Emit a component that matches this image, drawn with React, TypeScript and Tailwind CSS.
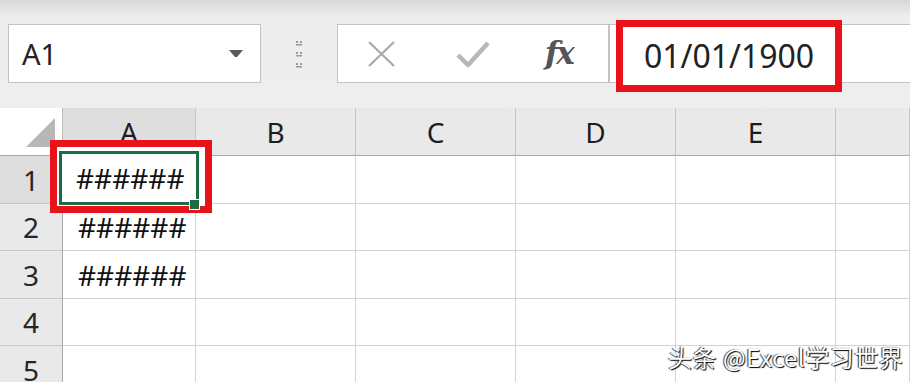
import React from "react";

const COLS = ["A", "B", "C", "D", "E", ""];
const ROWS = [
  { n: 1, h: "h-[48px]", v: "" },
  { n: 2, h: "h-[47px]", v: "######" },
  { n: 3, h: "h-[48px]", v: "######" },
  { n: 4, h: "h-[47px]", v: "" },
  { n: 5, h: "h-[48px]", v: "" },
];

function Grip() {
  return (
    <svg width="8" height="30" viewBox="0 0 8 30" className="text-[#9a9a9a]">
      {[2, 13, 24].map((y) => (
        <g key={y} fill="currentColor">
          <rect x="1" y={y} width="2" height="2" />
          <rect x="5" y={y} width="2" height="2" />
          <rect x="1" y={y + 3} width="6" height="1.5" />
        </g>
      ))}
    </svg>
  );
}

function FormulaBar() {
  return (
    <div className="h-[108px] bg-[linear-gradient(#d8d8d8,#ededed_16px,#eeeeee)] flex items-start pt-6">
      <div className="ml-2 w-[253px] h-[59px] bg-white border border-[#c3c3c3] flex items-center justify-between pl-[13px] pr-[17px]">
        <span className="text-[29px] text-[#222] leading-none">A1</span>
        <svg width="14" height="8" viewBox="0 0 14 8">
          <path d="M0 0 H14 L8 7 H6 Z" fill="#5a5a5a" />
        </svg>
      </div>
      <div className="w-[76px] h-[59px] flex items-center justify-center">
        <Grip />
      </div>
      <div className="w-[272px] h-[59px] bg-white border border-[#c3c3c3] flex items-center">
        <svg width="30" height="28" viewBox="0 0 30 28" className="ml-[29px]">
          <path d="M2 2 L27 26 M27 2 L2 26" stroke="#a9a9a9" strokeWidth="2.2" fill="none" />
        </svg>
        <svg width="34" height="28" viewBox="0 0 34 28" className="ml-[59px]">
          <path d="M2 15 L12 25 L32 3" stroke="#b8b8b8" strokeWidth="4.5" fill="none" strokeLinejoin="round" />
        </svg>
        <span className="ml-[55px] text-[31px] italic text-[#555] leading-none [font-family:'DejaVu_Serif','Liberation_Serif',serif] font-bold tracking-[-2px]">
          fx
        </span>
      </div>
      <div className="relative flex-1 h-[59px] bg-white border border-[#c3c3c3] border-r-0">
        <div className="absolute left-[6px] -top-[5px] w-[226px] h-[72px] border-[7px] border-[#e8121a] bg-white flex items-center justify-center">
          <span className="text-[32px] text-[#222] leading-none">01/01/1900</span>
        </div>
      </div>
    </div>
  );
}

function Sheet() {
  return (
    <div className="relative grid grid-cols-[63px_133px_160px_160px_160px_160px_1fr]">
      <div className="h-[48px] border-r border-b border-[#a9a9a9] border-r-[#bdbdbd] relative">
        <svg width="30" height="30" viewBox="0 0 30 30" className="absolute left-[26px] top-[10px]">
          <path d="M29 0 V29 H0 Z" fill="#b7b7b7" />
        </svg>
      </div>
      {COLS.map((c, i) => (
        <div
          key={i}
          className={`h-[48px] flex items-center justify-center border-b border-b-[#a9a9a9] border-r border-r-[#c6c6c6] text-[28px] text-[#1e1e1e] ${
            i === 0 ? "bg-[#dedede]" : "bg-[#e9e9e9]"
          }`}
        >
          {c}
        </div>
      ))}
      {ROWS.map((r) => (
        <React.Fragment key={r.n}>
          <div
            className={`${r.h} flex items-center justify-center border-r border-r-[#a9a9a9] border-b border-b-[#c6c6c6] text-[28px] text-[#262626] ${
              r.n === 1 ? "bg-[#dedede]" : "bg-[#e9e9e9]"
            }`}
          >
            {r.n}
          </div>
          {COLS.map((c, i) => (
            <div
              key={c + i}
              className={`${r.h} flex items-center pl-[15px] border-r border-b border-[#d2d2d2] bg-white text-[28px] text-[#111]`}
            >
              {i === 0 ? r.v : ""}
            </div>
          ))}
        </React.Fragment>
      ))}
      <div className="absolute left-[50px] top-[32px] w-[162px] h-[73px] border-[7px] border-[#e8121a] bg-white">
        <div className="absolute left-[2px] top-[4px] w-[140px] h-[54px] border-[3px] border-[#1e6b48] flex items-center pl-[14px] text-[28px] text-[#111]">
          ######
        </div>
        <div className="absolute left-[132px] top-[52px] w-[9px] h-[9px] bg-[#1e6b48] border border-white box-content" />
      </div>
    </div>
  );
}

export default function App() {
  return (
    <div className="relative w-[910px] h-[382px] overflow-hidden bg-white [font-family:'Noto_Sans','Liberation_Sans',sans-serif]">
      <FormulaBar />
      <Sheet />
      <div className="absolute left-[668px] top-[345px] text-[24px] leading-none tracking-[0.5px] text-white [font-family:'Noto_Sans_CJK_SC','Liberation_Sans',sans-serif] [text-shadow:1px_1px_1px_#000,-1px_0_1px_#333]">
        头条 @Excel学习世界
      </div>
    </div>
  );
}
